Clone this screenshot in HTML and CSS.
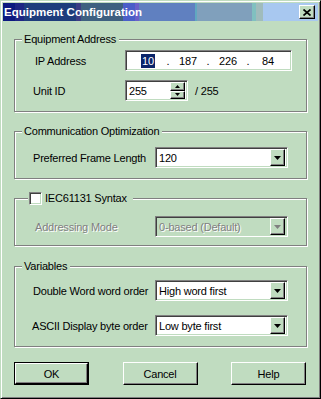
FILE: index.html
```html
<!DOCTYPE html>
<html lang="en">
<head>
  <meta charset="UTF-8">
  <title>Equipment Configuration</title>
  <link rel="stylesheet" href="styles.css">
</head>
<body>
  <div class="dialog">
    <div class="titlebar">
      <span class="title">Equipment Configuration</span>
      <span class="close">
        <svg width="8" height="7" viewBox="0 0 8 7"><path d="M0.5 0.5 L7.5 6.5 M7.5 0.5 L0.5 6.5" stroke="#000" stroke-width="1.7"/></svg>
      </span>
    </div>

    <div class="content">
      <!-- Equipment address -->
      <div class="group g-address">
        <span class="legend">Equipment Address</span>
        <div class="row">
          <span class="lbl lbl-short lbl-ip">IP Address</span>
          <div class="field ip">
            <span class="oct"><span class="sel">10</span></span><span class="dot">.</span>
            <span class="oct">187</span><span class="dot">.</span>
            <span class="oct">226</span><span class="dot">.</span>
            <span class="oct">84</span>
          </div>
        </div>
        <div class="row row-unit">
          <span class="lbl lbl-short">Unit ID</span>
          <div class="field spin">
            <span class="spin-val">255</span>
            <div class="spin-btns">
              <span class="spin-btn"><svg width="5" height="3" viewBox="0 0 5 3"><path d="M2.5 0 L5 3 L0 3 Z" fill="#000"/></svg></span>
              <span class="spin-btn"><svg width="5" height="3" viewBox="0 0 5 3"><path d="M0 0 L5 0 L2.5 3 Z" fill="#000"/></svg></span>
            </div>
          </div>
          <span class="max">/ 255</span>
        </div>
      </div>

      <!-- Communication -->
      <div class="group g-comm">
        <span class="legend">Communication Optimization</span>
        <div class="row">
          <span class="lbl">Preferred Frame Length</span>
          <div class="field combo">
            <span class="combo-val">120</span>
            <span class="drop"><svg width="7" height="4" viewBox="0 0 7 4"><path d="M0 0 L7 0 L3.5 4 Z" fill="#000"/></svg></span>
          </div>
        </div>
      </div>

      <!-- IEC syntax -->
      <div class="group g-iec">
        <span class="legend legend-check"><span class="checkbox"></span>IEC61131 Syntax</span>
        <div class="row">
          <span class="lbl disabled lbl-ad">Addressing Mode</span>
          <div class="field combo combo-disabled">
            <span class="combo-val">0-based (Default)</span>
            <span class="drop"><svg width="7" height="4" viewBox="0 0 7 4"><path d="M0 0 L7 0 L3.5 4 Z" fill="#808080"/></svg></span>
          </div>
        </div>
      </div>

      <!-- Variables -->
      <div class="group g-vars">
        <span class="legend">Variables</span>
        <div class="row">
          <span class="lbl">Double Word word order</span>
          <div class="field combo">
            <span class="combo-val">High word first</span>
            <span class="drop"><svg width="7" height="4" viewBox="0 0 7 4"><path d="M0 0 L7 0 L3.5 4 Z" fill="#000"/></svg></span>
          </div>
        </div>
        <div class="row row-ascii">
          <span class="lbl lbl-ascii">ASCII Display byte order</span>
          <div class="field combo">
            <span class="combo-val">Low byte first</span>
            <span class="drop"><svg width="7" height="4" viewBox="0 0 7 4"><path d="M0 0 L7 0 L3.5 4 Z" fill="#000"/></svg></span>
          </div>
        </div>
      </div>

      <div class="buttons">
        <span class="btn btn-default"><span class="btn-face">OK</span></span>
        <span class="btn"><span class="btn-face">Cancel</span></span>
        <span class="btn"><span class="btn-face">Help</span></span>
      </div>
    </div>
  </div>
</body>
</html>
```

FILE: styles.css
```css
* {
  box-sizing: border-box;
}

body {
  margin: 0;
  background: #c0dcc0;
  font-family: "Liberation Sans", Arial, sans-serif;
  font-size: 11px;
  letter-spacing: -0.2px;
  color: #000;
}

.dialog {
  width: 321px;
  height: 399px;
  padding: 2px;
  background: #c0dcc0;
  border: 1px solid;
  border-color: #c0dcc0 #000 #000 #c0dcc0;
  box-shadow: inset 1px 1px #fff, inset -1px -1px #808080;
}

/* title bar */
.titlebar {
  height: 18px;
  display: flex;
  align-items: center;
  justify-content: space-between;
  padding: 0 3px 0 1px;
  background: linear-gradient(to right,
    #0c1a80 0, #0c1a80 12px,
    #1e2684 12px, #1e2684 21px,
    #1e3c7c 21px, #1e3c7c 73px,
    #3c3c84 73px, #3c3c84 78px,
    #3e6080 78px, #3e6080 120px,
    #4a5ec8 120px, #4a5ec8 132px,
    #6a60c8 132px, #6a60c8 136px,
    #6080c0 136px, #6080c0 192px,
    #60a8c0 192px, #60a8c0 194px,
    #80a0bc 194px, #80a0bc 249px,
    #80c0c0 249px, #80c0c0 253px,
    #a0bcbc 253px, #a0bcbc 260px,
    #a8c8f0 260px, #a8c8f0 100%);
}

.title {
  color: #fff;
  font-weight: bold;
  font-size: 11.5px;
  letter-spacing: 0;
}

.close {
  width: 16px;
  height: 14px;
  display: flex;
  align-items: center;
  justify-content: center;
  background: #c0dcc0;
  border: 1px solid;
  border-color: #fff #000 #000 #fff;
  box-shadow: inset -1px -1px #808080;
}

/* content */
.content {
  padding: 18px 11px 0 11px;
}

.group {
  position: relative;
  border: 1px solid #808080;
  box-shadow: inset 1px 1px #fff, 1px 1px #fff;
  padding-left: 18px;
}

.legend {
  position: absolute;
  top: -7px;
  left: 7px;
  padding: 0 3px 0 2px;
  line-height: 13px;
  background: #c0dcc0;
  white-space: nowrap;
}

.legend-check {
  left: 13px;
  padding: 0 6px 0 1px;
  display: flex;
  align-items: center;
}

.checkbox {
  width: 13px;
  height: 13px;
  margin-right: 3px;
  background: #fff;
  border: 1px solid;
  border-color: #808080 #fff #fff #808080;
  box-shadow: inset 1px 1px #404040, inset -1px -1px #c0dcc0;
}

.g-address {
  height: 73px;
  padding-top: 10px;
}

.g-comm {
  height: 48px;
  margin-top: 19px;
  padding-top: 15px;
}

.g-iec {
  height: 48px;
  margin-top: 19px;
  padding-top: 17px;
}

.g-vars {
  height: 81px;
  margin-top: 20px;
  padding-top: 13px;
}

.row {
  display: flex;
  align-items: center;
  height: 21px;
}

.row-unit {
  margin-top: 9px;
}

.row-ascii {
  margin-top: 14px;
}

.lbl {
  width: 122px;
  white-space: nowrap;
}

.lbl-short {
  width: 92px;
}

.lbl-ip {
  padding-left: 2px;
}

.lbl-ad {
  padding-left: 2px;
}

.lbl-ascii {
  margin-left: -1px;
  width: 123px;
}

.disabled {
  color: #808080;
  text-shadow: 1px 1px #fff;
}

/* sunken edit fields */
.field {
  height: 21px;
  background: #fff;
  border: 1px solid;
  border-color: #808080 #fff #fff #808080;
  box-shadow: inset 1px 1px #404040, inset -1px -1px #c0dcc0;
  display: flex;
  align-items: center;
}

.ip {
  width: 167px;
  padding-left: 4px;
}

.oct {
  width: 36px;
  text-align: center;
}

.dot {
  width: 4px;
  text-align: center;
}

.sel {
  background: #0a246a;
  color: #fff;
  padding: 1px 1px;
}

.spin {
  width: 63px;
  padding: 2px 2px 2px 3px;
  justify-content: space-between;
}

.spin-btns {
  width: 15px;
  height: 17px;
  display: flex;
  flex-direction: column;
}

.spin-btn {
  flex: 1;
  display: flex;
  align-items: center;
  justify-content: center;
  background: #c0dcc0;
  border: 1px solid;
  border-color: #fff #000 #000 #fff;
  box-shadow: inset -1px -1px #808080;
}

.max {
  margin-left: 7px;
}

.combo {
  width: 133px;
  padding: 2px 2px 2px 3px;
  justify-content: space-between;
}

.combo-disabled {
  background: #c0dcc0;
  color: #808080;
  text-shadow: 1px 1px #fff;
}

.drop {
  width: 15px;
  height: 17px;
  display: flex;
  align-items: center;
  justify-content: center;
  background: #c0dcc0;
  border: 1px solid;
  border-color: #fff #000 #000 #fff;
  box-shadow: inset -1px -1px #808080;
}

/* buttons */
.buttons {
  display: flex;
  justify-content: space-between;
  margin-top: 15px;
  padding-right: 1px;
}

.btn {
  width: 75px;
  height: 23px;
  display: flex;
}

.btn-face {
  flex: 1;
  display: flex;
  align-items: center;
  justify-content: center;
  border: 1px solid;
  border-color: #fff #000 #000 #fff;
  box-shadow: inset -1px -1px #808080;
}

.btn-default {
  border: 1px solid #000;
}
```
